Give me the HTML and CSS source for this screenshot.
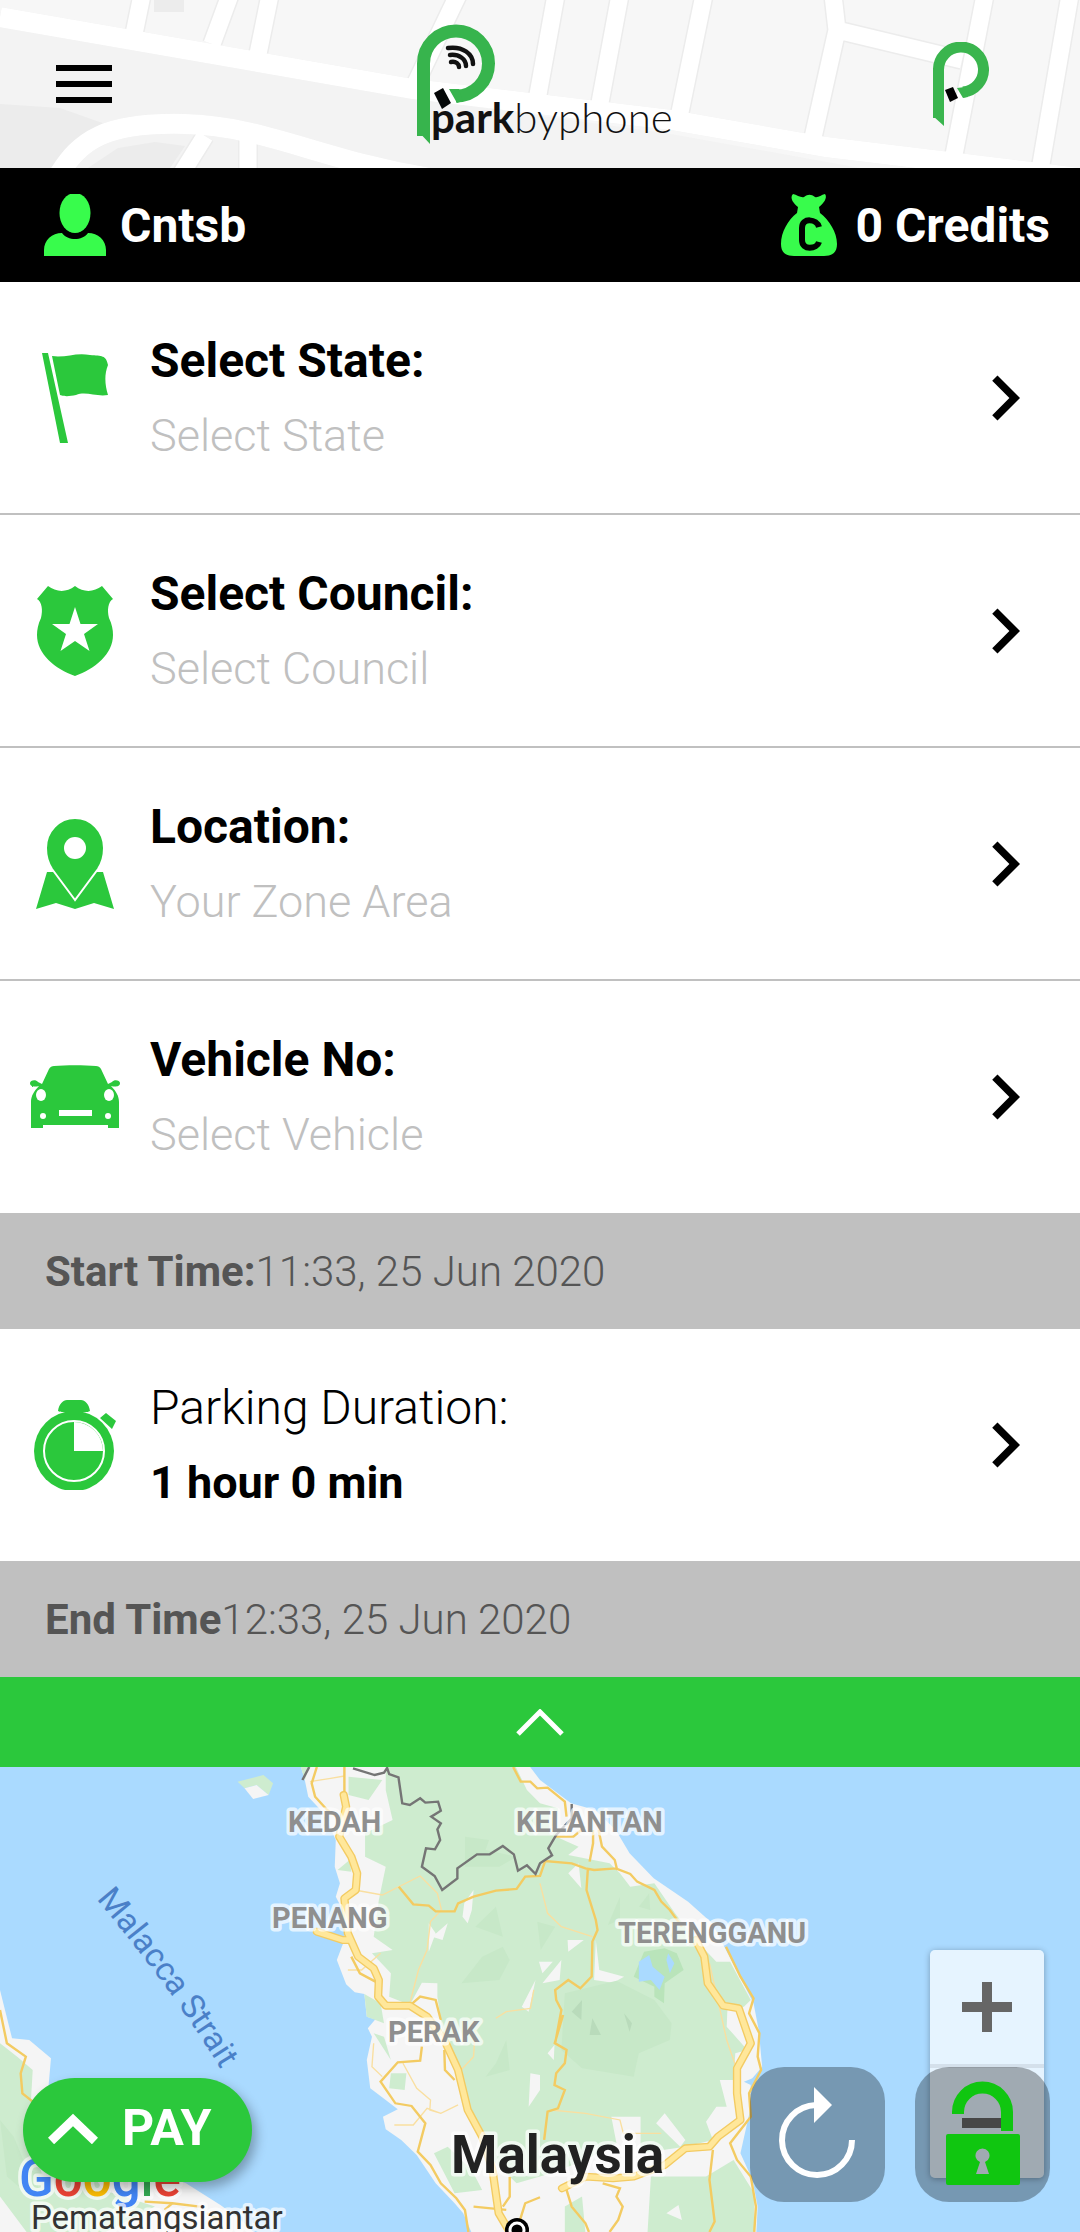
FILE: index.html
```html
<!DOCTYPE html>
<html lang="en">
<head>
	<meta charset="utf-8">
	<meta name="viewport" content="width=device-width">
	<title>parkbyphone</title>
	<link rel="stylesheet" href="styles.css">
</head>
<body>

<!-- shared icons -->
<svg class="sprite" aria-hidden="true">
	<symbol id="next" viewBox="0 0 24 24">
		<path d="M10 6L8.59 7.41 13.17 12l-4.58 4.59L10 18l6-6z"/>
	</symbol>
</svg>

<div class="page">
	<header class="header">
		<svg class="streets" viewBox="0 0 1080 168" preserveAspectRatio="xMidYMid slice" aria-hidden="true">
			<path fill="#f7f7f7" d="M0 0H1080V168H0z"/>
			<path fill="#f3f3f3" d="M0 20L413 98L671 134L860 168H0z"/>
			<path fill="#ececec" d="M0 104L60 108L108 125L50 168H0zM88 168L118 148L155 142L185 146L170 168zM154 0H184V12H154z"/>
			<g fill="none" stroke="#ececec" stroke-width="20">
				<path d="M0 17L413 89L671 120L826 147L1080 178M134 34L142 -5M212 44L230 -5M258 54L270 -5M413 89L458 -5M537 100L556 -5M599 108L620 -5M678 122L704 -5M833 -5L837 30L812 142M837 30L962 60M985 -5L953 160M1070 -5L1040 170"/>
				<path d="M58 176C80 140 105 122 185 124S320 160 430 178M205 136L180 176M248 136V176"/>
			</g>
			<g fill="none" stroke="#fff" stroke-width="17">
				<path d="M134 34L142 -5M212 44L230 -5M258 54L270 -5M413 89L458 -5M537 100L556 -5M599 108L620 -5M678 122L704 -5M833 -5L837 30L812 142M837 30L962 60M985 -5L953 160M1070 -5L1040 170"/>
				<path stroke-width="20" d="M0 17L413 89L671 120L826 147L1080 178M58 176C80 140 105 122 185 124S320 160 430 178"/>
				<path d="M205 136L180 176M248 136V176"/>
			</g>
		</svg>

		<button class="menu" aria-label="Menu"><i></i><i></i><i></i></button>

		<svg class="logo" viewBox="0 0 246 120" role="img" aria-label="parkbyphone">
			<path fill="none" stroke="#37b44d" stroke-width="13" d="M6.500 112V39.500A32.500 32.500 0 1 1 39 72"/>
			<path fill="#37b44d" d="M0 106L13 120V106zM32 65L40 79L46 77L42 65z"/>
			<path fill="none" stroke="#111" stroke-width="4.500" stroke-linecap="round" d="M31 24C46 22 56 30 56 40M33 31C42 30 49 35 49 42M34 38C39 37 42 40 42 43"/>
			<path fill="#050808" d="M17 69L26 64L34 79L25 85z"/>
			<text class="wordmark" x="14" y="109"><tspan class="wordmark-bold">park</tspan>byphone</text>
		</svg>

		<button class="brand" aria-label="Home">
			<svg viewBox="0 0 56 84" width="56" height="84">
				<path fill="none" stroke="#3ab54e" stroke-width="11" d="M5.500 76V28A22.500 22.500 0 1 1 30 50"/>
				<path fill="#3ab54e" d="M0 74L11 84V74zM24 46L30 56L35 55L32 45z"/>
				<path fill="#000" d="M12 48L20 45L25 56L17 60z"/>
			</svg>
		</button>
	</header>

	<div class="account">
		<div class="account-item">
			<svg viewBox="0 0 62 62" width="62" height="62" fill="#38fc4c">
				<ellipse cx="31" cy="19" rx="15.500" ry="20"/>
				<path d="M0 62V56C0 46 8 39 18 39C21 43 26 45 31 45S41 43 44 39C54 39 62 46 62 56V62z"/>
			</svg>
			<span>Cntsb</span>
		</div>
		<div class="account-item">
			<svg viewBox="0 0 62 62" width="62" height="62">
				<path fill="#38fc4c" d="M14 0C18 1 22 4 25 3C29 0 32 0 36 3C39 4 42 1 46 0C49 4 44 10 40 13L41 19C50 26 58 38 58 50C58 58 54 62 45 62H15C6 62 2 58 2 50C2 38 9 26 18 19L19 13C15 10 10 4 14 0z"/>
				<path fill="none" stroke="#000" stroke-width="6" d="M40 33C38 25 23 23 23 34V46C23 57 38 55 40 48"/>
			</svg>
			<span>0 Credits</span>
		</div>
	</div>

	<main class="form">
		<button class="row">
			<svg class="row-icon" viewBox="0 0 90 90">
				<path d="M12 0L18 0L38 90H30zM22 3C36 5 46-1 60 2C72 3 76 2 78 12C74 22 75 32 78 42C66 44 56 38 46 42C40 43 36 44 30 42z"/>
			</svg>
			<span class="row-text">
				<span class="title">Select State:</span>
				<span class="value">Select State</span>
			</span>
			<svg class="next"><use href="#next"/></svg>
		</button>

		<button class="row">
			<svg class="row-icon" viewBox="0 0 90 90">
				<path d="M18 0C26 6 36 7 45 0C54 7 64 6 72 0L83 13C78 16 77 24 79 32C82 38 83 44 83 49C83 68 65 83 45 90C25 83 7 68 7 49C7 44 8 38 11 32C13 24 12 16 7 13z"/>
				<path fill="#fff" d="M45 21L50.500 38H68L54 48L59.500 65L45 55L30.500 65L36 48L22 38H39.500z"/>
			</svg>
			<span class="row-text">
				<span class="title">Select Council:</span>
				<span class="value">Select Council</span>
			</span>
			<svg class="next"><use href="#next"/></svg>
		</button>

		<button class="row">
			<svg class="row-icon" viewBox="0 0 90 90">
				<path d="M17 53L73 53L84 90L64 84L45 90L26 84L6 90z"/>
				<path stroke="#fff" stroke-width="2" d="M45 81L22 50C18 44 16 36 16 29A29 30 0 0 1 74 29C74 36 72 44 68 50z"/>
				<circle cx="45" cy="29" r="11" fill="#fff"/>
			</svg>
			<span class="row-text">
				<span class="title">Location:</span>
				<span class="value">Your Zone Area</span>
			</span>
			<svg class="next"><use href="#next"/></svg>
		</button>

		<button class="row row-last">
			<svg class="row-icon" viewBox="0 0 90 90">
				<path d="M19 17C20 15 22 14 24 14C36 13 54 13 66 14C68 14 70 15 71 17L78 32L82 30C84 27 90 28 90 31C90 35 85 35 81 34C86 39 89 44 89 50V76H78V73H13V76H1V50C1 44 4 39 9 34C5 35 0 35 0 31C0 28 6 27 8 30L12 32z"/>
				<g fill="#fff">
					<ellipse cx="11" cy="43" rx="5" ry="6"/>
					<ellipse cx="79" cy="43" rx="5" ry="6"/>
					<circle cx="13" cy="64" r="3"/>
					<circle cx="78" cy="64" r="3"/>
					<path d="M29 58H62V64H29z"/>
				</g>
			</svg>
			<span class="row-text">
				<span class="title">Vehicle No:</span>
				<span class="value">Select Vehicle</span>
			</span>
			<svg class="next"><use href="#next"/></svg>
		</button>

		<p class="time"><b>Start Time:</b>11:33, 25 Jun 2020</p>

		<button class="row row-last duration">
			<svg class="row-icon" viewBox="0 0 90 90">
				<circle cx="44" cy="51" r="40"/>
				<path d="M28 11C29 4 33 0 37 0H51C55 0 59 4 60 11C57 13 53 11 51 14H37C35 11 31 13 28 11zM76 13L86 21L82 29L70 18z"/>
				<circle cx="44" cy="51" r="30" fill="none" stroke="#fff" stroke-width="2"/>
				<path fill="#fff" d="M44 51V22A29 29 0 0 1 73 51z"/>
			</svg>
			<span class="row-text">
				<span class="title">Parking Duration:</span>
				<span class="value">1 hour 0 min</span>
			</span>
			<svg class="next"><use href="#next"/></svg>
		</button>

		<p class="time"><b>End Time</b>12:33, 25 Jun 2020</p>
	</main>

	<button class="collapse" aria-label="Collapse">
		<svg viewBox="0 0 48 27" width="48" height="27">
			<path fill="none" stroke="#fff" stroke-width="5" d="M2 25L24 3L46 25"/>
		</svg>
	</button>

	<section class="map">
		<svg class="map-canvas" viewBox="0 0 1080 465" preserveAspectRatio="xMinYMin slice">
			<g transform="translate(0 -27) scale(.3444 .3333)">
				<!-- land -->
				<g fill="#f5f5f5">
					<path d="M872 75L885 120L895 170L940 220L975 300L972 380L987 430L975 470L1000 520L1000 600L978 660L1005 733L1030 757L1058 762L1065 830L1090 838L1068 865L1080 890L1065 960L1075 1045L1120 1080L1155 1108L1112 1130L1120 1168L1165 1200L1210 1245L1265 1330L1320 1390L1345 1420L1370 1480H2196L2200 1400L2185 1320L2150 1240L2178 1110L2180 1020L2213 980L2203 870L2188 790L2113 640L2068 550L1998 485L1898 415L1828 340L1788 270L1728 210L1658 190L1568 120L1535 75z"/>
					<path d="M0 750L35 895L85 900L148 955L140 1050L110 1090L200 1200L540 1330L640 1395L700 1440L740 1480H0z"/>
				</g>
				<g fill="#ceeccf">
					<path d="M872 75L885 120L900 75zM1012 110L1110 120L1070 180L1012 165z"/>
					<path d="M1120 75H1495L1530 150L1568 190L1620 205L1615 290L1680 320L1650 345L1770 370L1800 400L1830 440L1900 430L1960 520L2020 600L2080 665L2120 665L2180 780L2160 800L2112 810L2110 860L2170 930L2135 940L2130 1020L2090 1020L2110 1100L2080 1100L2050 1145L2070 1200L1990 1220L1860 1240L1860 1130L1775 1130L1790 1210L1700 1260L1600 1300L1500 1330L1420 1250L1380 1160L1330 1010L1290 910L1270 770L1270 730L1225 728L1190 795L1130 770L1135 700L1080 640L1140 630L1085 590L1100 480L1120 380L1060 350L1060 280L1140 240L1120 150z"/>
					<path d="M1890 1310L2050 1310L2130 1260L2190 1360V1480H1880zM1640 1400L1690 1370L1700 1480H1640zM1135 1000L1180 1000L1175 1050L1130 1045zM980 390L1015 360L1020 395zM1260 1240L1300 1220L1370 1290L1400 1350L1320 1360zM1058 762L1105 790L1115 850L1065 830zM1085 880L1115 890L1135 960z"/>
					<path d="M0 910L50 950L95 990L90 1080L200 1200L300 1350L450 1400L300 1480H80L0 1370z"/>
					<path d="M690 125L765 105L793 130L780 165L745 135L710 145z"/>
				</g>
				<path fill="#f5f5f5" d="M710 145L745 135L780 165L735 177z"/>
				<g fill="#f5f5f5">
					<path d="M1375 450L1370 510L1358 550L1343 530L1348 490zM1300 550L1285 600L1255 590zM1245 550L1265 580L1245 635zM1555 720L1535 815L1515 800zM1650 400L1680 370L1688 445zM1565 665L1605 665L1575 700zM1648 600L1695 600L1650 635zM1575 730L1630 660L1625 720zM1730 600L1740 690L1812 710L1780 728L1725 720zM1590 940L1610 915L1608 960zM1930 1120L1990 1200L1975 1220L1905 1150zM1540 1000L1568 1005V1050L1535 1100zM1935 1420L1970 1395L1980 1440z"/>
				</g>
				<!-- hills -->
				<g fill="#c7e8c8">
					<path d="M1640 760L1790 722L1900 780L1950 850L1945 900L1855 940L1840 1010L1690 985L1630 930z"/>
					<path d="M1350 290L1420 300L1410 330L1500 350L1450 380L1350 380zM1400 650L1460 620L1480 660L1450 720L1340 730zM1440 970L1470 900L1480 990L1410 1010zM1380 560L1440 500L1460 590zM1560 545L1612 560L1570 630zM1765 555L1800 470L1800 540zM1855 500L1885 460L1888 510zM0 1140L40 1190L80 1290L120 1300L100 1380L20 1310z"/>
				</g>
				<path fill="#b9e4ba" d="M1870 635L1930 625L1965 640L1985 690L1930 730L1928 790L1900 770L1900 740L1840 710z"/>
				<path fill="#b9dbbb" d="M1712 885L1720 835L1745 885zM1660 815L1690 780L1688 840zM1812 820L1835 850L1828 875z"/>
				<path fill="#aadaff" d="M1855 665L1885 645L1895 680L1930 710L1915 750L1890 720L1855 725zM1935 660L1940 640L1958 670L1945 700zM2160 1025L2185 1015L2180 1035z"/>
				<!-- roads -->
				<g fill="none" stroke="#f9dfa0" stroke-width="4">
					<path d="M900 125L960 115L1000 108M1030 450L1110 465L1220 408L1270 460L1282 510L1250 545L1240 630L1215 690L1190 790M1010 690L1050 690L1105 640M1085 910L1080 980L1110 1010M1170 970L1210 1045L1250 1080L1248 1110L1280 1120L1330 1095M1380 870L1375 950L1330 1000M1440 835L1470 815L1540 805L1550 750M1568 430L1590 520L1630 560L1720 590M1600 1110L1700 1120L1800 1140L1810 1180L1920 1180M2060 670L2080 760L2110 900L2140 990M1145 1155H1200L1240 1105L1280 1120"/>
				</g>
				<g fill="none" stroke="#f3cb62" stroke-width="7">
					<path d="M920 81L905 130L915 170L950 210L990 240M1000 81V160M1490 81L1512 125L1540 125L1560 145L1590 143L1640 185L1645 230M1158 440L1200 493L1245 497L1265 514H1320L1330 490L1375 470L1440 452L1500 447L1525 410L1568 408L1583 363L1660 370L1700 385L1725 390L1788 385L1830 402L1850 425L1900 450L1920 485L1945 510L1980 560M1610 290L1665 290L1700 260M1722 270V310L1712 365M1738 270L1748 320L1785 360L1792 390M1707 385L1703 450L1730 540L1735 570L1720 605L1718 710L1685 745L1650 720L1612 750L1615 780L1630 810L1612 910L1645 930L1640 970L1615 1000L1610 1035L1640 1050L1620 1105L1590 1115L1580 1200M2108 620L2150 710L2188 775L2175 820L2205 880L2200 950L2210 990L2175 1060L2180 1130L2120 1210L2140 1260L2180 1310L2195 1400L2190 1476M2070 1230L2060 1320L2075 1445L2060 1476M1020 650L1045 700L1090 725M1190 797L1220 770L1265 780L1280 840M1225 920L1220 962L1155 967L1105 1025L1148 1090L1195 1098L1235 1150L1213 1235L1250 1275L1280 1330L1325 1375L1350 1410L1360 1476M1290 930L1292 990L1320 1020M1375 1400L1470 1410M1480 1310V1370L1460 1400M1568 1372L1525 1390L1510 1440M1645 1350L1660 1400L1700 1450L1710 1476M1750 1330L1800 1345L1790 1370L1808 1400L1795 1440L1770 1476M1610 912L1635 825"/>
					<path d="M0 810L20 910L75 950L60 1000L65 1060L95 1085M420 1385L500 1390L580 1400M500 1390L478 1410M600 1420L640 1440"/>
				</g>
				<g fill="none" stroke-linejoin="round" stroke-linecap="round">
					<path stroke="#f3cb62" stroke-width="24" d="M998 165L1005 200L985 290L1020 350L1037 400L1033 450L1000 475L1010 580L1040 650L1085 685L1100 720L1098 770L1120 797H1190L1240 830L1290 900L1330 990L1358 1110L1400 1190L1430 1290L1448 1420L1480 1476M1010 600H995L920 575M2020 600L2045 650L2055 730L2100 797L2145 805L2180 910L2140 985V1060L2150 1140L2085 1190L2060 1220L1990 1225L1930 1275L1840 1310L1780 1315L1700 1310L1632 1345"/>
					<path stroke="#ffe79a" stroke-width="16" d="M998 165L1005 200L985 290L1020 350L1037 400L1033 450L1000 475L1010 580L1040 650L1085 685L1100 720L1098 770L1120 797H1190L1240 830L1290 900L1330 990L1358 1110L1400 1190L1430 1290L1448 1420L1480 1476M1010 600H995L920 575M2020 600L2045 650L2055 730L2100 797L2145 805L2180 910L2140 985V1060L2150 1140L2085 1190L2060 1220L1990 1225L1930 1275L1840 1310L1780 1315L1700 1310L1632 1345"/>
				</g>
				<!-- border with Thailand -->
				<path fill="none" stroke="#757575" stroke-width="7" d="M898 81L878 120M1025 85L1088 105L1115 98L1124 84L1130 102L1157 112L1168 190L1190 195L1220 175L1235 188L1272 185L1280 212L1252 230L1280 250L1270 268L1278 300L1263 328L1237 325L1225 380L1262 408L1284 450L1328 415V385L1385 343H1422L1460 318L1492 343L1504 392L1530 376L1555 402L1568 370L1603 346L1592 325L1615 285L1660 235V192"/>
			</g>

			<g class="city">
				<circle cx="517" cy="463" r="12"/>
				<circle cx="517" cy="463" r="7" fill="none" stroke="#fff" stroke-width="3"/>
			</g>
			<g class="state">
				<text x="288" y="65">KEDAH</text>
				<text x="516" y="65">KELANTAN</text>
				<text x="272" y="161">PENANG</text>
				<text x="618" y="176">TERENGGANU</text>
				<text x="388" y="275">PERAK</text>
			</g>
			<text class="country" x="451" y="406">Malaysia</text>
			<path id="strait" fill="none" d="M96 132Q174 224 228 314"/>
			<text class="water"><textPath href="#strait">Malacca Strait</textPath></text>
			<text class="google" x="19" y="429"><tspan fill="#4285f4">G</tspan><tspan fill="#ea4335">o</tspan><tspan fill="#fbbc05">o</tspan><tspan fill="#4285f4">g</tspan><tspan fill="#34a853">l</tspan><tspan fill="#ea4335">e</tspan></text>
			<text class="town" x="31" y="462">Pematangsiantar</text>
		</svg>

		<div class="zoom">
			<button aria-label="Zoom in">
				<svg viewBox="0 0 50 50" width="50" height="50"><path d="M20 0H30V20H50V30H30V50H20V30H0V20H20z"/></svg>
			</button>
			<button aria-label="Zoom out">
				<svg viewBox="0 0 50 50" width="50" height="50"><path d="M0 20H50V30H0z"/></svg>
			</button>
		</div>

		<button class="pay">
			<svg viewBox="0 0 50 31" width="50" height="31"><path fill="none" stroke="#fff" stroke-width="9" d="M3 28L25 7L47 28"/></svg>
			PAY
		</button>

		<div class="tools">
			<button class="tool" aria-label="Refresh">
				<svg viewBox="0 0 135 135">
					<path fill="none" stroke="#fff" stroke-width="6" d="M102 73A35 35 0 1 1 66 38"/>
					<path fill="#fff" d="M64 20L82 38L64 56z"/>
				</svg>
			</button>
			<button class="tool" aria-label="Unlock">
				<svg viewBox="0 0 135 135">
					<path fill="none" stroke="#10c610" stroke-width="12" d="M43 47V45A24.500 24.500 0 0 1 92 45V64"/>
					<path fill="#10c610" fill-rule="evenodd" d="M33 67H103Q105 67 105 69V116Q105 118 103 118H33Q31 118 31 116V69Q31 67 33 67zM65 95L61 107H74L70 95A7 7 0 1 0 65 95z"/>
				</svg>
			</button>
		</div>
	</section>
</div>

</body>
</html>
```
FILE: styles.css
```css
* {
	box-sizing: border-box;
	margin: 0;
	padding: 0;
}
body {
	font-family: Roboto, "Liberation Sans", sans-serif;
	color: #000;
	background: #fff;
}
button {
	border: 0;
	background: none;
	font: inherit;
	color: inherit;
	cursor: pointer;
}
svg {
	display: block;
	flex: none;
}
.sprite {
	position: absolute;
	width: 0;
	height: 0;
}
.page {
	display: flex;
	flex-direction: column;
	min-height: 100vh;
}

/* header */
.header {
	position: relative;
	display: grid;
	grid-template-columns: 1fr auto 1fr;
	align-items: center;
	padding: 24px 56px;
	overflow: hidden;
}
.streets {
	position: absolute;
	top: 0;
	left: 0;
	width: 100%;
	height: 100%;
}
.menu,
.logo,
.brand {
	position: relative;
}
.menu {
	display: flex;
	flex-direction: column;
	gap: 10px;
	width: 56px;
}
.menu i {
	height: 6px;
	background: #000;
}
.logo {
	width: 246px;
	height: 120px;
	overflow: visible;
}
.wordmark {
	font-family: Lato, sans-serif;
	font-size: 42px;
	font-weight: 300;
	fill: #111;
}
.wordmark-bold {
	font-weight: 700;
}
.brand {
	justify-self: end;
	margin-right: 35px;
}

/* user and credits */
.account {
	display: flex;
	justify-content: space-between;
	padding: 26px 30px 24px 44px;
	background: #000;
	color: #fff;
	font-size: 48px;
	line-height: 64px;
	font-weight: 700;
}
.account-item {
	display: flex;
	gap: 14px;
}

/* form rows */
.row {
	display: flex;
	align-items: center;
	gap: 30px;
	width: 100%;
	padding: 41px 30px 40px;
	border-bottom: 2px solid #c0c0c0;
	text-align: left;
	line-height: 75px;
}
.row-last {
	padding-bottom: 41px;
	border-bottom: 0;
}
.row-icon {
	width: 90px;
	height: 90px;
	fill: #2bc83c;
}
.row-text {
	flex: 1;
}
.title,
.value {
	display: block;
}
.title {
	font-size: 48px;
	font-weight: 700;
}
.value {
	font-size: 45px;
	font-weight: 300;
	color: #c0c0c0;
}
.next {
	width: 90px;
	height: 90px;
}
.duration .title {
	font-weight: 300;
}
.duration .value {
	font-weight: 700;
	color: #000;
}
.time {
	padding: 30px 45px 28px;
	background: #c0c0c0;
	color: #555;
	font-size: 42px;
	line-height: 58px;
	font-weight: 300;
}
.time b {
	font-weight: 700;
}
.collapse {
	display: flex;
	justify-content: center;
	align-items: center;
	height: 90px;
	background: #2bc83c;
}

/* map */
.map {
	position: relative;
	flex: 1;
	min-height: 465px;
	background: #aadaff;
	overflow: hidden;
}
.map-canvas {
	position: absolute;
	width: 100%;
	height: 100%;
}
.map-canvas text {
	stroke: rgba(255, 255, 255, .7);
	stroke-width: 7px;
	stroke-linejoin: round;
	paint-order: stroke;
}
.state {
	font-size: 29px;
	font-weight: 700;
	fill: #8f8f8f;
}
.country {
	font-size: 53px;
	font-weight: 700;
	fill: #222;
}
.map-canvas .water {
	font-size: 33px;
	fill: #4a80c8;
	stroke: none;
}
.google {
	font-size: 51px;
	font-weight: 500;
}
.town {
	font-size: 33px;
	fill: #333;
}
.zoom {
	position: absolute;
	right: 36px;
	bottom: 54px;
	width: 114px;
	border-radius: 5px;
	background: rgba(255, 255, 255, .7);
	box-shadow: 0 1px 6px rgba(0, 0, 0, .3);
}
.zoom button {
	display: flex;
	justify-content: center;
	align-items: center;
	width: 100%;
	height: 114px;
	fill: #666;
}
.zoom button + button {
	border-top: 4px solid rgba(0, 0, 0, .08);
}
.pay {
	position: absolute;
	left: 23px;
	bottom: 50px;
	display: flex;
	align-items: center;
	gap: 24px;
	height: 104px;
	padding: 0 40px 4px 25px;
	border-radius: 52px;
	background: #2bc83c;
	color: #fff;
	font-size: 50px;
	font-weight: 700;
	box-shadow: 4px 6px 12px rgba(0, 0, 0, .3);
}
.tools {
	position: absolute;
	right: 30px;
	bottom: 30px;
	display: flex;
	gap: 30px;
}
.tool {
	width: 135px;
	height: 135px;
	border-radius: 34px;
	background: rgba(0, 0, 0, .3);
}
```
